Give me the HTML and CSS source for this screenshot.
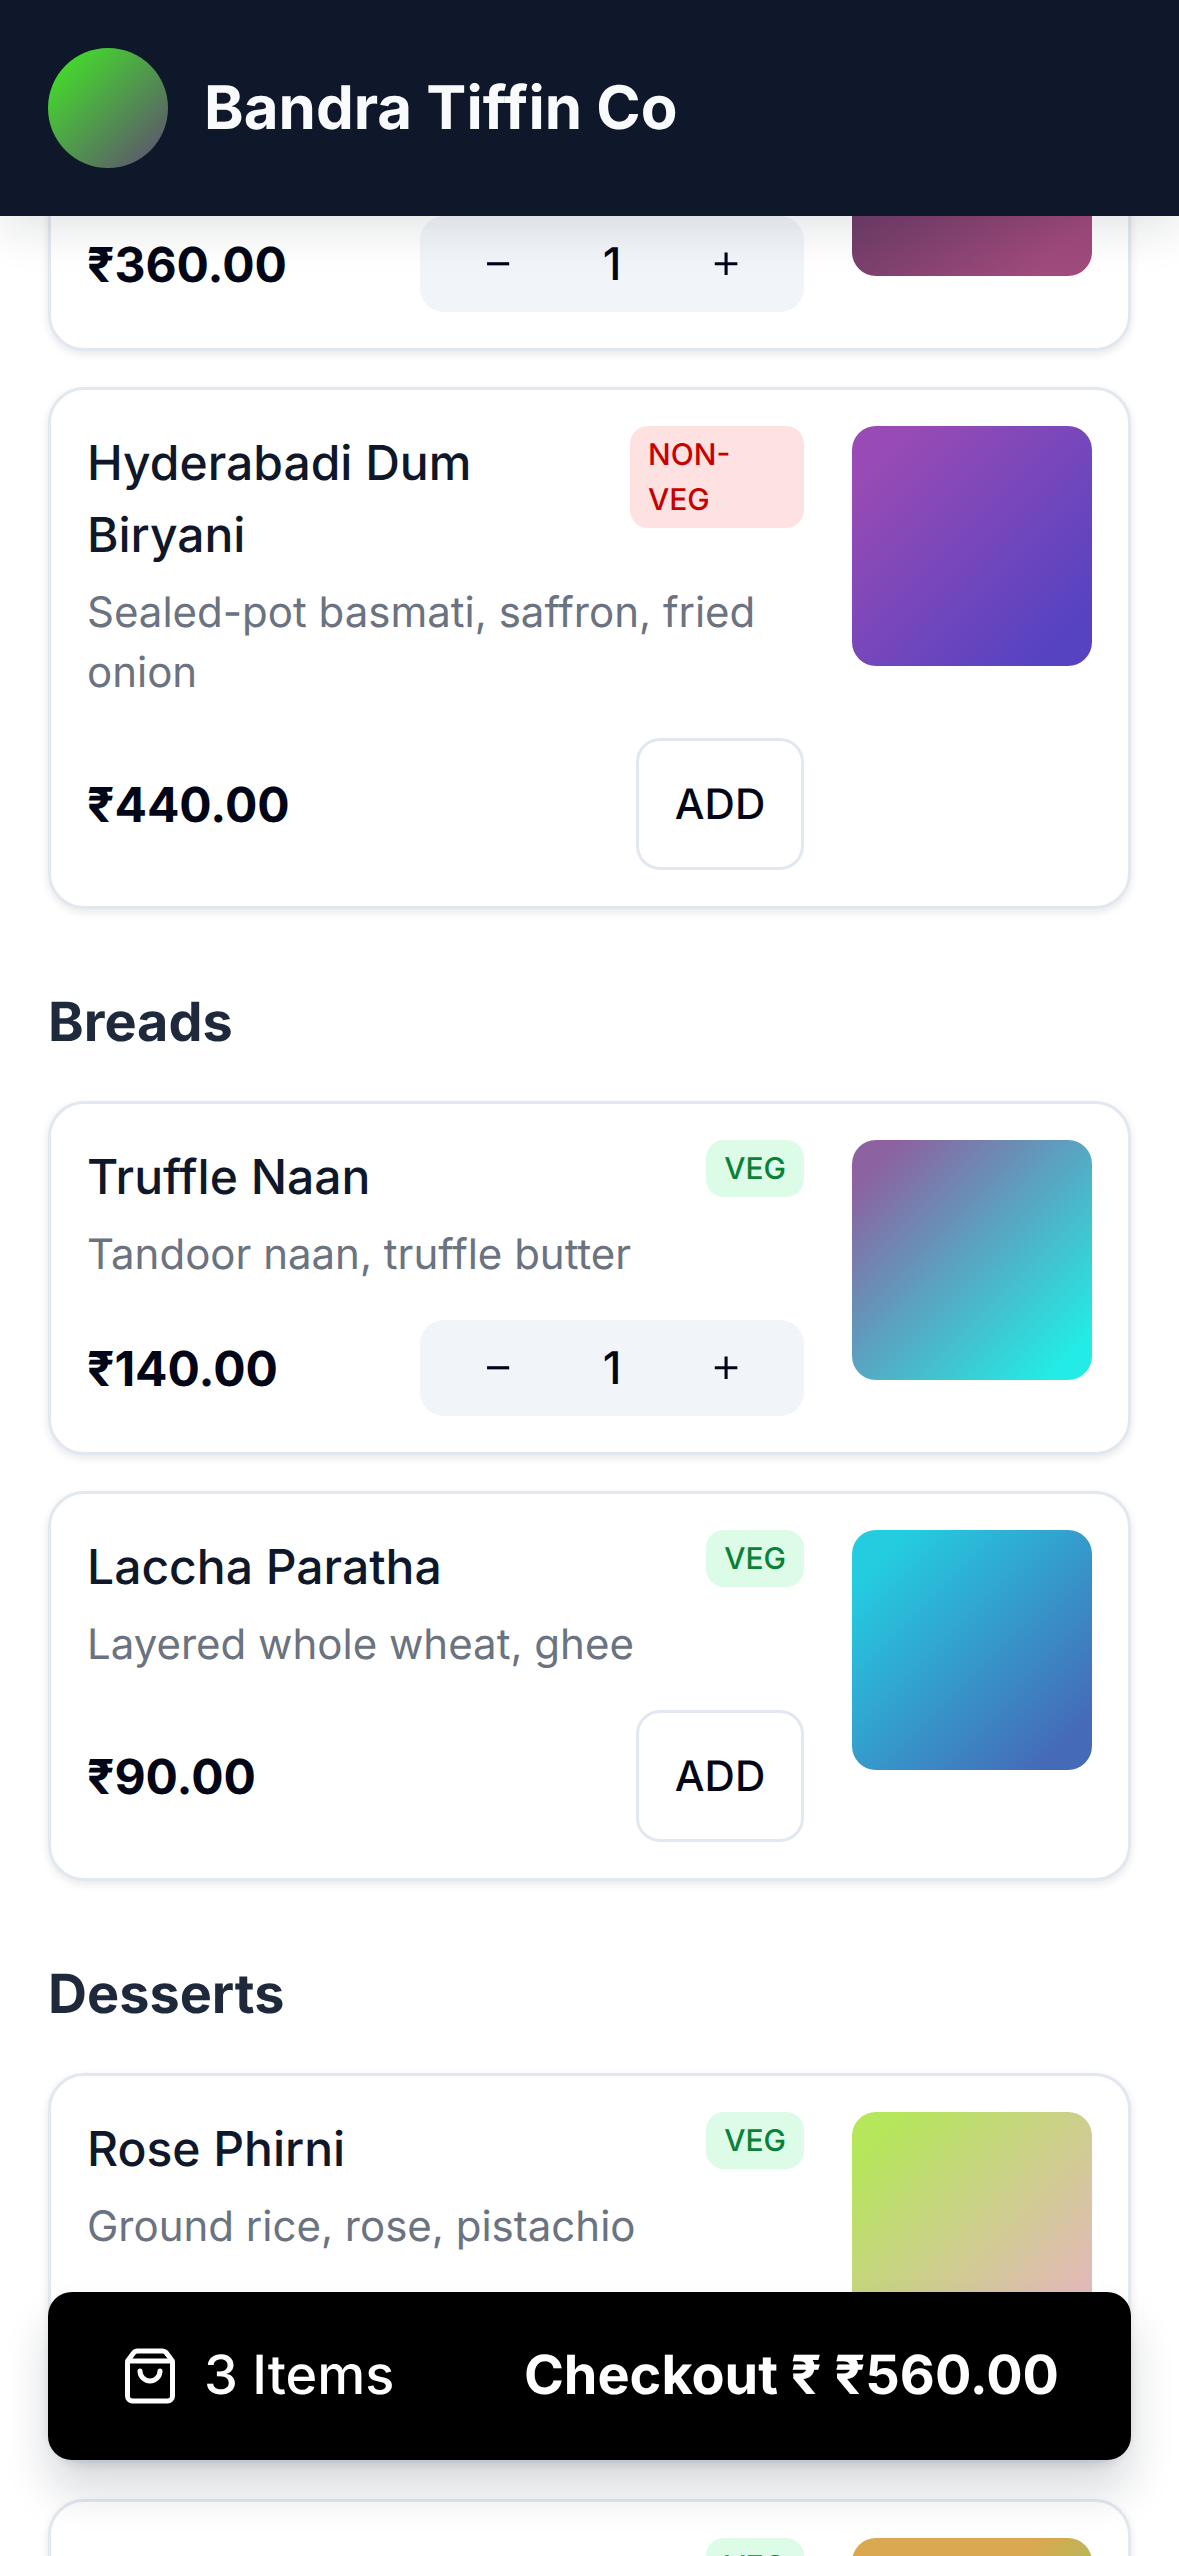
FILE: index.html
```html
<!DOCTYPE html>
<html lang="en">
<head>
<meta charset="utf-8">
<title>Bandra Tiffin Co</title>
<link rel="stylesheet" href="styles.css">
</head>
<body>
<header class="topbar">
  <div class="logo"></div>
  <h1 class="brand">Bandra Tiffin Co</h1>
</header>
<main class="menu">
  <article class="card">
    <div class="info">
      <div class="head"><h3 class="name">&nbsp;</h3></div>
      <p class="desc">&nbsp;</p>
      <div class="buy">
        <span class="price">₹360.00</span>
        <div class="stepper"><button class="step">−</button><span class="qty">1</span><button class="step">+</button></div>
      </div>
    </div>
    <div class="thumb thumb-plum"></div>
  </article>
  <article class="card">
    <div class="info">
      <div class="head"><h3 class="name">Hyderabadi Dum Biryani</h3><span class="tag tag-nonveg">NON-VEG</span></div>
      <p class="desc">Sealed-pot basmati, saffron, fried onion</p>
      <div class="buy">
        <span class="price">₹440.00</span>
        <button class="add">ADD</button>
      </div>
    </div>
    <div class="thumb thumb-violet"></div>
  </article>
  <h2 class="section">Breads</h2>
  <article class="card">
    <div class="info">
      <div class="head"><h3 class="name">Truffle Naan</h3><span class="tag tag-veg">VEG</span></div>
      <p class="desc">Tandoor naan, truffle butter</p>
      <div class="buy">
        <span class="price">₹140.00</span>
        <div class="stepper"><button class="step">−</button><span class="qty">1</span><button class="step">+</button></div>
      </div>
    </div>
    <div class="thumb thumb-teal"></div>
  </article>
  <article class="card">
    <div class="info">
      <div class="head"><h3 class="name">Laccha Paratha</h3><span class="tag tag-veg">VEG</span></div>
      <p class="desc">Layered whole wheat, ghee</p>
      <div class="buy">
        <span class="price">₹90.00</span>
        <button class="add">ADD</button>
      </div>
    </div>
    <div class="thumb thumb-blue"></div>
  </article>
  <h2 class="section">Desserts</h2>
  <article class="card">
    <div class="info">
      <div class="head"><h3 class="name">Rose Phirni</h3><span class="tag tag-veg">VEG</span></div>
      <p class="desc">Ground rice, rose, pistachio</p>
      <div class="buy">
        <span class="price">&nbsp;</span>
        <button class="add">&nbsp;</button>
      </div>
    </div>
    <div class="thumb thumb-rose"></div>
  </article>
  <article class="card">
    <div class="info">
      <div class="head"><h3 class="name">&nbsp;</h3><span class="tag tag-veg">VEG</span></div>
    </div>
    <div class="thumb thumb-amber"></div>
  </article>
</main>
<a class="cartbar">
  <span class="cart-left">
    <svg class="bag" viewBox="0 0 24 24" fill="none" stroke="currentColor" stroke-width="2" stroke-linecap="round" stroke-linejoin="round"><path d="M16 10a4 4 0 0 1-8 0"/><path d="M3.103 6.034h17.794"/><path d="M3.4 5.467a2 2 0 0 0-.4 1.2V20a2 2 0 0 0 2 2h14a2 2 0 0 0 2-2V6.667a2 2 0 0 0-.4-1.2l-2.1-2.8A2 2 0 0 0 17 2H7a2 2 0 0 0-1.6.8z"/></svg>
    <span class="count">3 Items</span>
  </span>
  <span class="checkout">Checkout ₹ ₹560.00</span>
</a>
</body>
</html>
```
FILE: styles.css
```css
* { box-sizing: border-box; }
html, body { margin: 0; padding: 0; }
body {
  height: 2556px;
  overflow: hidden;
  background: #fff;
  font-family: Inter, "Noto Sans", sans-serif;
  color: #0f172a;
  text-rendering: geometricPrecision;
}
h1, h2, h3, p { margin: 0; }
button { font-family: inherit; color: inherit; padding: 0; text-rendering: inherit; }

.topbar {
  position: relative;
  z-index: 2;
  height: 216px;
  padding: 0 48px;
  display: flex;
  align-items: center;
  gap: 36px;
  background: #0f172a;
  box-shadow: 0 12px 45px rgba(15, 23, 42, 0.12);
}
.logo {
  width: 120px;
  height: 120px;
  border-radius: 50%;
  background: linear-gradient(135deg, #45d42f 15%, #5c5c6a 88%);
}
.brand {
  font-size: 60px;
  line-height: 84px;
  font-weight: 700;
  color: #f8fafc;
}

.menu {
  margin-top: -219px;
  padding: 0 48px;
  display: flex;
  flex-direction: column;
  gap: 36px;
}
.section {
  margin-top: 36px;
  font-size: 54px;
  line-height: 84px;
  font-weight: 700;
  color: #1e293b;
}
.card {
  display: flex;
  gap: 48px;
  padding: 36px;
  background: #fff;
  border: 3px solid #e2e8f0;
  border-radius: 36px;
  box-shadow: 0 3px 9px rgba(15, 23, 42, 0.1);
}
.info { flex: 1; min-width: 0; padding-top: 1px; }
.head {
  display: flex;
  justify-content: space-between;
  align-items: flex-start;
  gap: 24px;
}
.name {
  font-size: 48px;
  line-height: 72px;
  font-weight: 500;
  color: #0f172a;
}
.tag {
  margin-top: -1px;
  padding: 7px 18px 5px;
  border-radius: 18px;
  font-size: 30px;
  line-height: 45px;
  font-weight: 500;
}
.tag-veg { background: #dcfce7; color: #0b8038; }
.tag-nonveg { flex: none; width: 174px; background: #fee2e2; color: #c70000; }
.desc {
  margin-top: 12px;
  font-size: 42px;
  line-height: 60px;
  color: #6b7280;
}
.buy {
  margin-top: 35px;
  display: flex;
  justify-content: space-between;
  align-items: center;
}
.price { padding-top: 2px; font-size: 48px; line-height: 72px; font-weight: 700; color: #020617; }
.stepper {
  width: 384px;
  height: 96px;
  padding: 0 36px;
  display: flex;
  align-items: center;
  background: #f1f5f9;
  border-radius: 24px;
}
.step {
  width: 84px;
  height: 96px;
  padding-bottom: 6px;
  border: 0;
  background: none;
  font-size: 50px;
  line-height: 60px;
  font-weight: 300;
  color: #020617;
}
.qty { flex: 1; text-align: center; font-size: 45px; line-height: 60px; font-weight: 500; color: #020617; }
.add {
  width: 168px;
  height: 132px;
  background: #fff;
  border: 3px solid #e2e8f0;
  border-radius: 24px;
  font-size: 42px;
  font-weight: 500;
  color: #020617;
}
.thumb { flex: none; width: 240px; height: 240px; border-radius: 24px; }
.thumb-plum { background: linear-gradient(135deg, #56365e 12%, #a04a7d 88%); }
.thumb-violet { background: linear-gradient(135deg, #984bb4 12%, #5643c2 88%); }
.thumb-teal { background: linear-gradient(135deg, #8c62a0 10%, #23ebe5 90%); }
.thumb-blue { background: linear-gradient(135deg, #24cce0 12%, #456bb8 88%); }
.thumb-rose { background: linear-gradient(135deg, #b5e65b 10%, #e2bab8 85%); }
.thumb-amber { background: linear-gradient(135deg, #d9a851 40%, #a8c05a 62%); }

.cartbar {
  position: fixed;
  z-index: 3;
  left: 48px;
  right: 48px;
  bottom: 96px;
  height: 168px;
  padding: 0 72px;
  display: flex;
  justify-content: space-between;
  align-items: center;
  background: #000;
  color: #fff;
  border-radius: 24px;
  box-shadow: 0 30px 45px rgba(15, 23, 42, 0.16);
}
.cart-left { display: flex; align-items: center; gap: 24px; }
.bag { width: 60px; height: 60px; flex: none; }
.count { font-size: 54px; line-height: 72px; font-weight: 500; }
.checkout { font-size: 54px; line-height: 72px; font-weight: 700; }
```
